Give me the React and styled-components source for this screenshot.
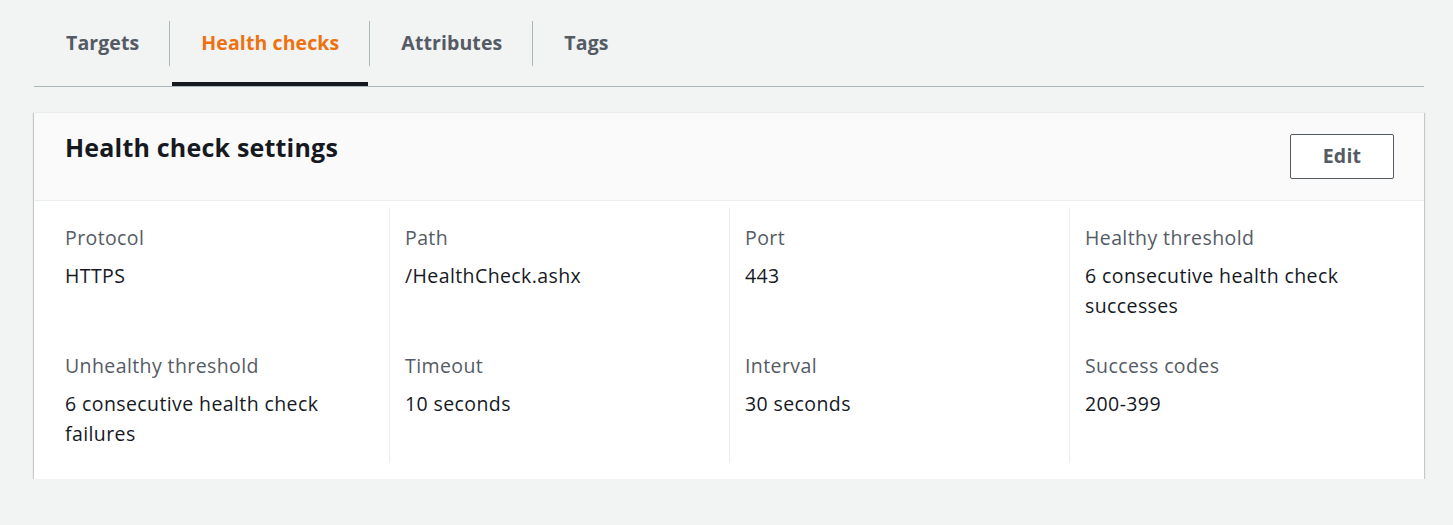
import React from 'react';
import styled, { createGlobalStyle } from 'styled-components';

const GlobalStyle = createGlobalStyle`
  html, body {
    margin: 0;
    padding: 0;
    background: #f2f3f3;
    font-family: "Open Sans", "Noto Sans", Arial, sans-serif;
    color: #16191f;
  }
`;

const Page = styled.div`
  padding: 0 29px 0 34px;
`;

const TabList = styled.div`
  display: flex;
  border-bottom: 1px solid #aab7b8;
`;

const Tab = styled.button`
  position: relative;
  background: none;
  border: none;
  padding: 21px 0 20px;
  margin: 0;
  cursor: pointer;
  font-family: inherit;

  &::after {
    content: '';
    display: ${(p) => (p.$active ? 'block' : 'none')};
    position: absolute;
    left: 3px;
    right: 1px;
    bottom: 0;
    height: 4px;
    background: #16191f;
  }
`;

const TabLabel = styled.span`
  display: block;
  height: 45px;
  line-height: 44px;
  padding: 0 30px 0 31px;
  border-left: 1px solid ${(p) => (p.$first ? 'transparent' : '#aab7b8')};
  font-size: 19.5px;
  letter-spacing: 0.1px;
  font-weight: 700;
  color: ${(p) => (p.$active ? '#ec7211' : '#545b64')};
  white-space: nowrap;
`;

const Card = styled.section`
  margin-top: 25px;
  background: #fff;
  box-shadow: 0 1px 1px 0 rgba(0, 28, 36, 0.3), 1px 1px 1px 0 rgba(0, 28, 36, 0.15),
    -1px 1px 1px 0 rgba(0, 28, 36, 0.15);
  border-top: 1px solid #eaeded;
`;

const CardHeader = styled.header`
  display: flex;
  justify-content: space-between;
  align-items: flex-start;
  padding: 20px 30px 21px 31px;
  background: #fafafa;
  border-bottom: 1px solid #eaeded;
`;

const Title = styled.h2`
  margin: -2px 0 0;
  font-size: 25px;
  letter-spacing: 0.2px;
  line-height: 32px;
  font-weight: 700;
  color: #16191f;
`;

const EditButton = styled.button`
  margin-top: 1px;
  height: 45px;
  width: 104px;
  padding: 0 0 2px;
  background: #fff;
  border: 1px solid #545b64;
  border-radius: 2px;
  font-family: inherit;
  font-size: 19.5px;
  letter-spacing: 0.2px;
  font-weight: 700;
  color: #545b64;
  cursor: pointer;
`;

const CardBody = styled.div`
  padding: 7px 15px 16px;
`;

const Grid = styled.dl`
  display: grid;
  grid-template-columns: repeat(4, 1fr);
  margin: 0;
`;

const Cell = styled.div`
  border-left: 1px solid ${(p) => (p.$first ? 'transparent' : '#eaeded')};
  padding: ${(p) => (p.$top ? '15px 15px 15px' : '16px 15px 15px')};
`;

const Label = styled.dt`
  font-size: 19.5px;
  letter-spacing: 0.4px;
  line-height: 29px;
  color: #545b64;
  margin-bottom: 9px;
`;

const Value = styled.dd`
  margin: 0;
  font-size: 19.5px;
  letter-spacing: 0.4px;
  line-height: 29.5px;
  color: #16191f;
`;

const tabs = ['Targets', 'Health checks', 'Attributes', 'Tags'];

const settings = [
  { label: 'Protocol', value: 'HTTPS' },
  { label: 'Path', value: '/HealthCheck.ashx' },
  { label: 'Port', value: '443' },
  { label: 'Healthy threshold', value: '6 consecutive health check successes' },
  { label: 'Unhealthy threshold', value: '6 consecutive health check failures' },
  { label: 'Timeout', value: '10 seconds' },
  { label: 'Interval', value: '30 seconds' },
  { label: 'Success codes', value: '200-399' },
];

export default function App() {
  const [activeTab, setActiveTab] = React.useState('Health checks');

  return (
    <>
      <GlobalStyle />
      <Page>
        <TabList role="tablist">
          {tabs.map((t, i) => (
            <Tab key={t} $active={t === activeTab} onClick={() => setActiveTab(t)}>
              <TabLabel $first={i === 0} $active={t === activeTab}>
                {t}
              </TabLabel>
            </Tab>
          ))}
        </TabList>

        <Card>
          <CardHeader>
            <Title>Health check settings</Title>
            <EditButton>Edit</EditButton>
          </CardHeader>
          <CardBody>
            <Grid>
              {settings.map((s, i) => (
                <Cell key={s.label} $first={i % 4 === 0} $top={i < 4}>
                  <Label>{s.label}</Label>
                  <Value>{s.value}</Value>
                </Cell>
              ))}
            </Grid>
          </CardBody>
        </Card>
      </Page>
    </>
  );
}
